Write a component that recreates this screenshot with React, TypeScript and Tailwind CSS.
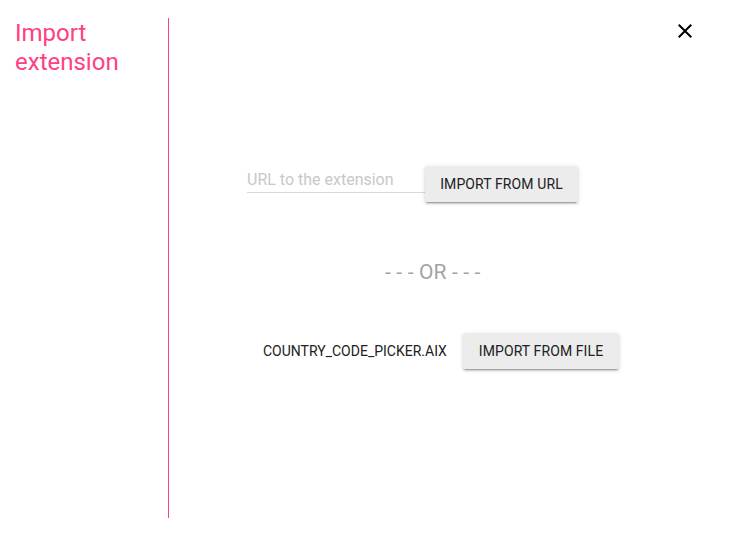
import React from "react";

export default function App() {
  return (
    <div className="w-[732px] h-[536px] bg-white flex font-['Roboto',sans-serif] overflow-hidden">
      <div className="w-[169px] shrink-0 py-[18px]">
        <div className="h-full border-r border-[#ff4081] pl-[15px] pr-[10px]">
          <h1 className="text-[24px] leading-[29px] pt-[1px] font-normal text-[#ff4081]">Import extension</h1>
        </div>
      </div>
      <div className="relative flex-1 flex flex-col pt-[166px]">
        <button className="absolute top-[19px] right-[35px] w-[24px] h-[24px] text-black" aria-label="close">
          <svg width="24" height="24" viewBox="0 0 24 24" fill="currentColor">
            <path d="M19 6.41L17.59 5 12 10.59 6.41 5 5 6.41 10.59 12 5 17.59 6.41 19 12 13.41 17.59 19 19 17.59 13.41 12z" />
          </svg>
        </button>
        <div className="flex items-start pl-[78px]">
          <input
            placeholder="URL to the extension"
            className="w-[178px] h-[26px] mt-[1px] pb-[1px] px-0 border-b border-[#d9d9d9] text-[16px] outline-none placeholder:text-[#c8c8c8] bg-transparent"
          />
          <button className="w-[153px] h-[36px] bg-[#ececec] rounded-[2px] text-[14px] font-normal tracking-[0.1px] text-[#212121] shadow-[0_3px_1px_-2px_rgba(0,0,0,0.2),0_2px_2px_0_rgba(0,0,0,0.14),0_1px_5px_0_rgba(0,0,0,0.12)]">
            IMPORT FROM URL
          </button>
        </div>
        <div className="mt-[58px] pl-[216px] text-[21px] leading-[25px] tracking-[0.15px] text-[#a3a3a3] whitespace-pre">- - - OR - - -</div>
        <div className="mt-[48px] flex items-center pl-[94px]">
          <span className="w-[200px] text-[14px] text-[#212121]">COUNTRY_CODE_PICKER.AIX</span>
          <button className="w-[156px] h-[36px] bg-[#ececec] rounded-[2px] text-[14px] font-normal tracking-[0.1px] text-[#212121] shadow-[0_3px_1px_-2px_rgba(0,0,0,0.2),0_2px_2px_0_rgba(0,0,0,0.14),0_1px_5px_0_rgba(0,0,0,0.12)]">
            IMPORT FROM FILE
          </button>
        </div>
      </div>
    </div>
  );
}
